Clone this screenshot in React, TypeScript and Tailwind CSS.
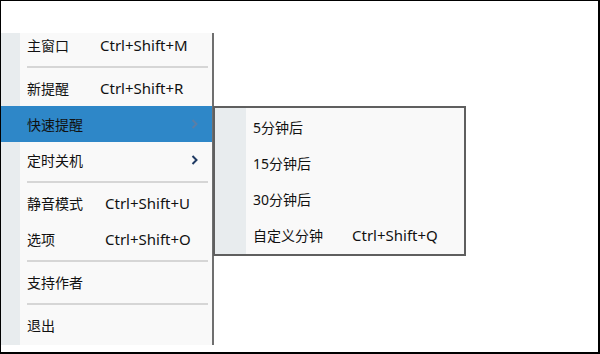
import React from "react";

type Item =
  | { kind: "sep" }
  | {
      kind: "item";
      label: string;
      shortcut?: string;
      labelWidth?: number;
      submenu?: boolean;
      active?: boolean;
      first?: boolean;
    };

const mainItems: Item[] = [
  { kind: "item", label: "主窗口", shortcut: "Ctrl+Shift+M", labelWidth: 73, first: true },
  { kind: "sep" },
  { kind: "item", label: "新提醒", shortcut: "Ctrl+Shift+R", labelWidth: 73 },
  { kind: "item", label: "快速提醒", submenu: true, active: true },
  { kind: "item", label: "定时关机", submenu: true },
  { kind: "sep" },
  { kind: "item", label: "静音模式", shortcut: "Ctrl+Shift+U", labelWidth: 78 },
  { kind: "item", label: "选项", shortcut: "Ctrl+Shift+O", labelWidth: 78 },
  { kind: "sep" },
  { kind: "item", label: "支持作者" },
  { kind: "sep" },
  { kind: "item", label: "退出" },
];

const subItems = [
  { label: "5分钟后" },
  { label: "15分钟后" },
  { label: "30分钟后" },
  { label: "自定义分钟", shortcut: "Ctrl+Shift+Q" },
];

const font = { fontFamily: '"Noto Sans", "Noto Sans CJK SC", sans-serif' };

function Chevron({ active }: { active?: boolean }) {
  return (
    <svg width="7" height="10" viewBox="0 0 7 10" className="ml-auto mr-[14px]">
      <path
        d="M1.5 1 L5.5 5 L1.5 9"
        fill="none"
        stroke={active ? "#5b7ea6" : "#1f3a63"}
        strokeWidth="2"
      />
    </svg>
  );
}

function MainMenu() {
  return (
    <div className="relative w-[213px] h-[312px] mt-[32px] bg-[#f9f9f9] border-r-2 border-[#6f6f6f] overflow-hidden">
      {/* gutter */}
      <div className="absolute left-0 top-0 bottom-0 w-[19px] bg-[#e8ecee]" />
      <div className="relative flex flex-col">
        {mainItems.map((item, i) =>
          item.kind === "sep" ? (
            <div key={i} className="h-[7px] flex items-center pl-[26px] pr-[4px]">
              <div className="h-[2px] w-full bg-[#d6d6d6]" />
            </div>
          ) : (
            <div
              key={i}
              className={[
                "flex items-center text-[14px] text-[#111]",
                item.first ? "h-[30px] pb-[5px]" : "h-[36px]",
                item.active ? "bg-[#2e87c8]" : "",
              ].join(" ")}
            >
              <span
                className="pl-[26px] shrink-0"
                style={item.labelWidth ? { width: item.labelWidth + 26 } : undefined}
              >
                {item.label}
              </span>
              {item.shortcut && <span className="text-[15px]">{item.shortcut}</span>}
              {item.submenu && <Chevron active={item.active} />}
            </div>
          )
        )}
      </div>
    </div>
  );
}

function SubMenu() {
  return (
    <div className="absolute left-[212px] top-[105px] w-[253px] border-2 border-[#5f5f5f] bg-[#f9f9f9] py-[1px]">
      <div className="absolute left-0 top-0 bottom-0 w-[31px] bg-[#e8ecee]" />
      <div className="relative flex flex-col">
        {subItems.map((s) => (
          <div key={s.label} className="h-[36px] flex items-center text-[14px] text-[#111]">
            <span className="pl-[38px] w-[137px] shrink-0">{s.label}</span>
            {s.shortcut && <span className="text-[15px]">{s.shortcut}</span>}
          </div>
        ))}
      </div>
    </div>
  );
}

export default function App() {
  return (
    <div
      className="relative w-[600px] h-[354px] bg-white border-l border-t border-r-2 border-b-2 border-black flex"
      style={font}
    >
      <MainMenu />
      <SubMenu />
    </div>
  );
}
